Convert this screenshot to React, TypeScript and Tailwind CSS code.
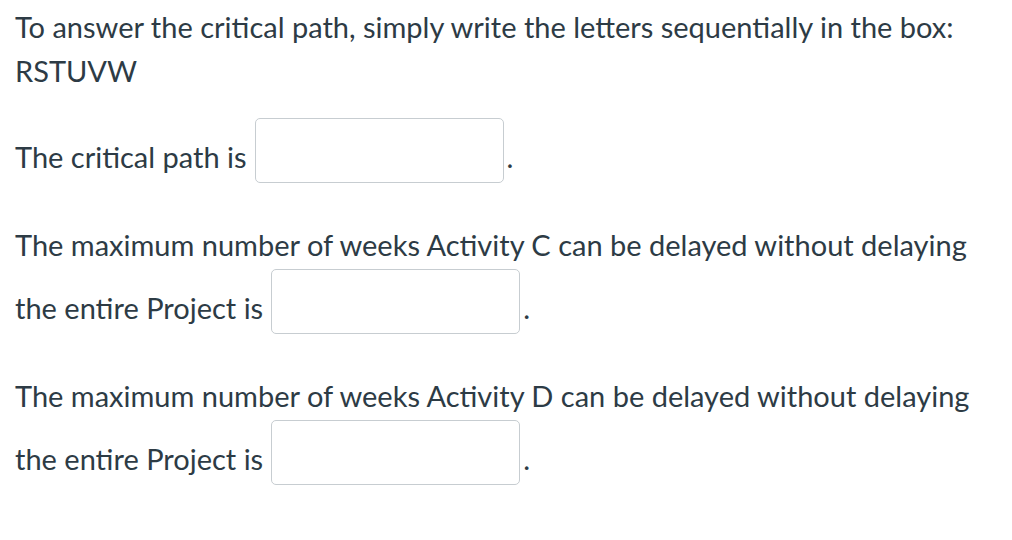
import React from 'react';

const AnswerBox = () => (
  <input
    type="text"
    className="h-[65px] w-[249px] shrink-0 rounded-[5px] border border-[#c7cdd1] bg-white outline-none"
  />
);

const BlankRow = ({ label }: { label: string }) => (
  <div className="flex items-end">
    <span className="mb-[12px] whitespace-nowrap leading-none">{label}</span>
    <div className="ml-[8px]">
      <AnswerBox />
    </div>
    <span className="mb-[12px] ml-[3px] leading-none">.</span>
  </div>
);

export default function App() {
  return (
    <div
      className="min-h-[540px] bg-white px-[15px] text-[29px] text-[#2d3b45]"
      style={{ fontFamily: 'Lato, "Open Sans", sans-serif' }}
    >
      <div className="pt-[12px] whitespace-nowrap leading-none">
        To answer the critical path, simply write the letters sequentially in
        the box:
      </div>
      <div className="mt-[15px] leading-none">RSTUVW</div>

      <div className="mt-[33px]">
        <BlankRow label="The critical path is" />
      </div>

      <div className="mt-[47px] whitespace-nowrap leading-none">
        The maximum number of weeks Activity C can be delayed without delaying
      </div>
      <div className="mt-[10px]">
        <BlankRow label="the entire Project is" />
      </div>

      <div className="mt-[47px] whitespace-nowrap leading-none">
        The maximum number of weeks Activity D can be delayed without delaying
      </div>
      <div className="mt-[10px]">
        <BlankRow label="the entire Project is" />
      </div>
    </div>
  );
}
